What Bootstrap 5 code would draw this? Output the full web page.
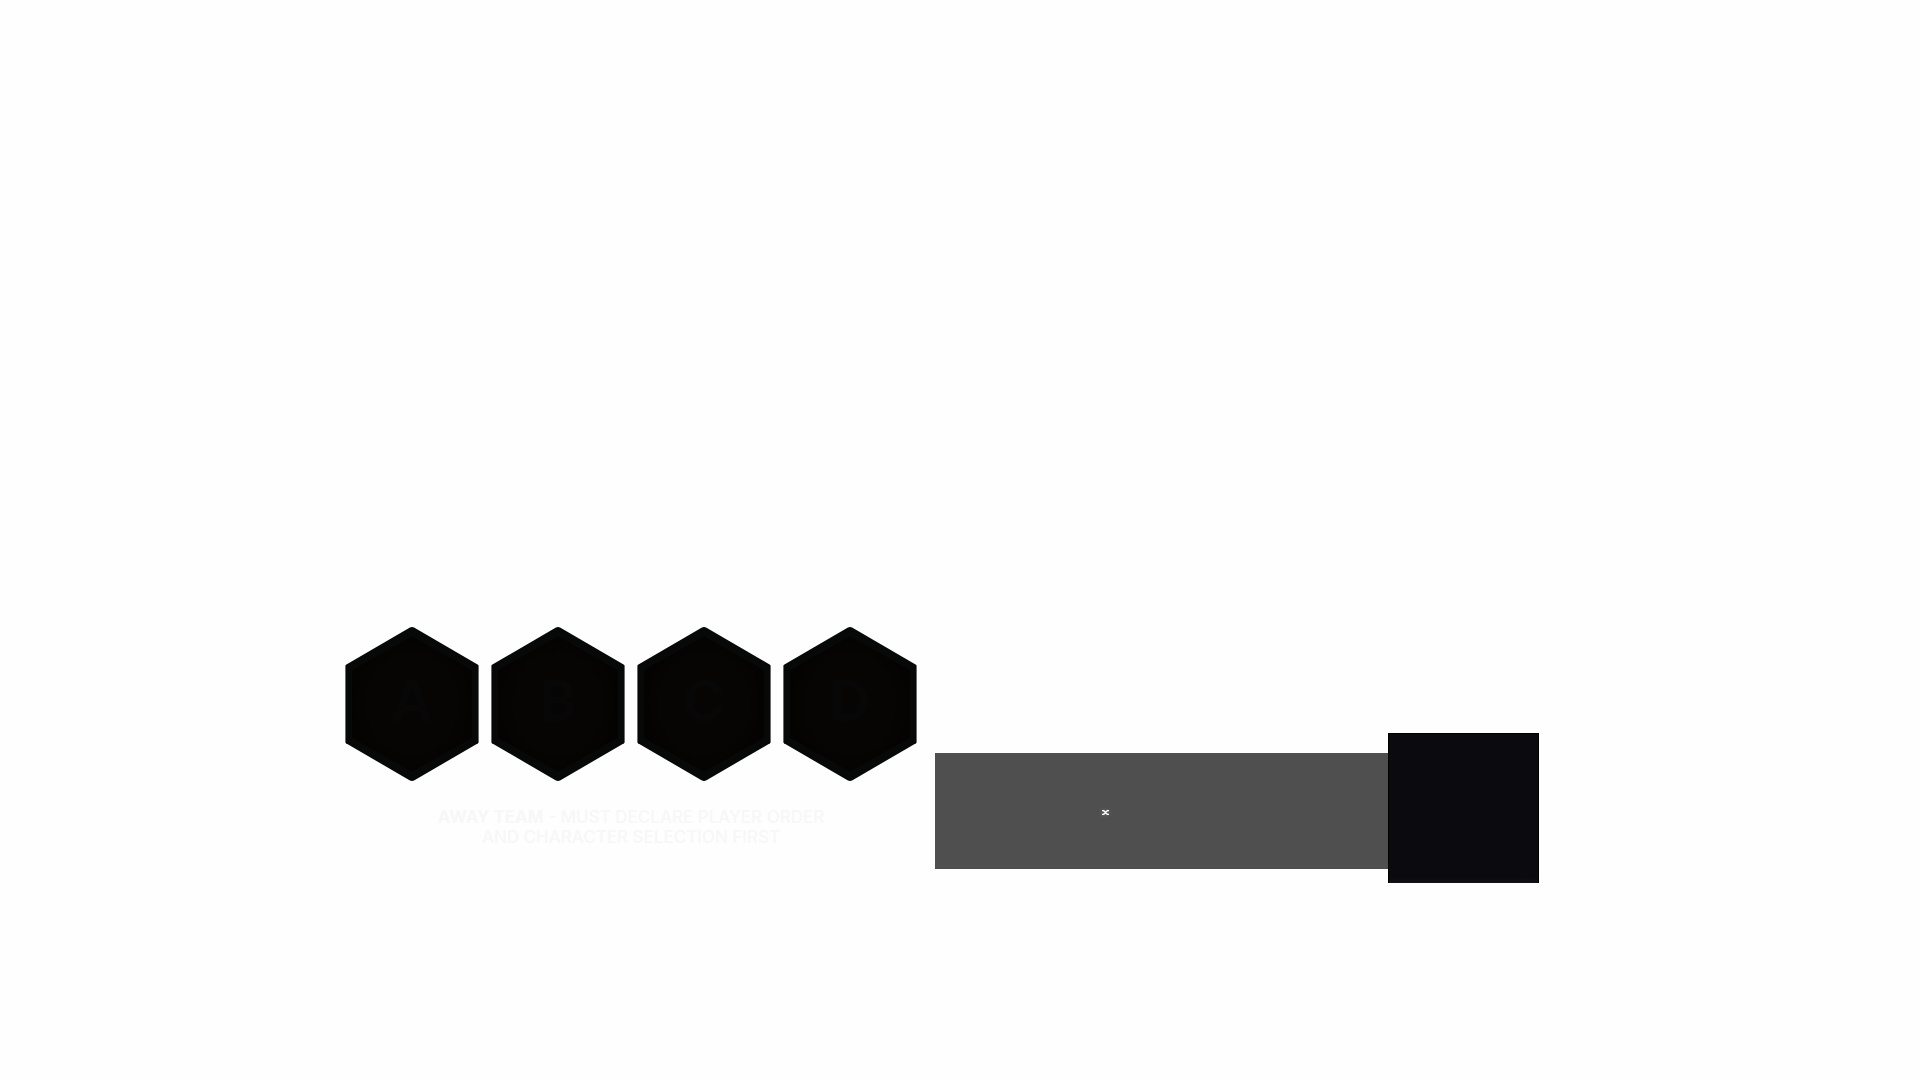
<!DOCTYPE html>
<html lang="en">
<head>
<meta charset="utf-8">
<meta name="viewport" content="width=device-width, initial-scale=1">
<title>Away team selection</title>
<link href="https://cdn.jsdelivr.net/npm/bootstrap@5.3.0/dist/css/bootstrap.min.css" rel="stylesheet">
<style>
body { background: #fefefe; font-family: Inter, "Liberation Sans", sans-serif; }
.stage { padding: 627px 36px 0 0; }
.hexes { gap: 12px; }
.hex-slot { width: 134px; height: 154px; }
.hex-slot text { font: 700 56px Inter, "Liberation Sans", sans-serif; fill: #080708; text-anchor: middle; }
.notice { color: #f7f7f7; font-size: 17px; line-height: 20px; font-weight: 500; margin-top: 26px; }
.notice strong { font-weight: 700; }
.panel { margin: 106px 0 0 18px; }
.bar { width: 453px; height: 116px; background: #4f4f4f; margin-top: 20px; padding: 57px 0 0 167px; }
.bar button { line-height: 0; filter: drop-shadow(0 0 2px #777); }
.tile { width: 151px; height: 150px; background: linear-gradient(#0a0a0f 144px, #121217); border: 1px solid #000; border-bottom: 0; }
</style>
</head>
<body>
<main class="stage d-flex justify-content-center align-items-start">
  <section>
    <div class="hexes d-flex">
      <svg class="hex-slot" viewBox="0 0 134 154" role="img" aria-label="A"><use href="#hex"/><text x="67" y="94">A</text></svg>
      <svg class="hex-slot" viewBox="0 0 134 154" role="img" aria-label="B"><use href="#hex"/><text x="67" y="94">B</text></svg>
      <svg class="hex-slot" viewBox="0 0 134 154" role="img" aria-label="C"><use href="#hex"/><text x="67" y="94">C</text></svg>
      <svg class="hex-slot" viewBox="0 0 134 154" role="img" aria-label="D"><use href="#hex"/><text x="67" y="94">D</text></svg>
    </div>
    <p class="notice text-center mb-0"><strong>AWAY TEAM</strong> - MUST DECLARE PLAYER ORDER<br>AND CHARACTER SELECTION FIRST</p>
  </section>
  <section class="panel d-flex align-items-start">
    <div class="bar">
      <button type="button" class="btn p-0 border-0 d-block" aria-label="Close">
        <svg width="7" height="5" viewBox="0 0 7 5"><path d="M0 .5H1.5L5.5 4.5H7M0 4.5H1.5L5.5 .5H7" fill="none" stroke="#fff" stroke-width="1.5"/></svg>
      </button>
    </div>
    <div class="tile"></div>
  </section>
</main>
<svg class="position-absolute" width="0" height="0" aria-hidden="true">
  <defs>
    <radialGradient id="core"><stop offset="0" stop-color="#060505"/><stop offset=".7" stop-color="#060503"/><stop offset="1" stop-color="#040302"/></radialGradient>
    <g id="hex">
      <path d="M64.5 .8Q67 -.6 69.5 .8L133 37.7Q133.6 38.1 133.6 39V115Q133.6 115.9 133 116.3L69.5 153.2Q67 154.6 64.5 153.2L1 116.3Q.4 115.9 .4 115V39Q.4 38.1 1 37.7Z" fill="#070908"/>
      <path d="M67 9 127 43V111L67 145 7 111V43Z" fill="url(#core)"/>
    </g>
  </defs>
</svg>
<script src="https://cdn.jsdelivr.net/npm/bootstrap@5.3.0/dist/js/bootstrap.bundle.min.js"></script>
</body>
</html>
